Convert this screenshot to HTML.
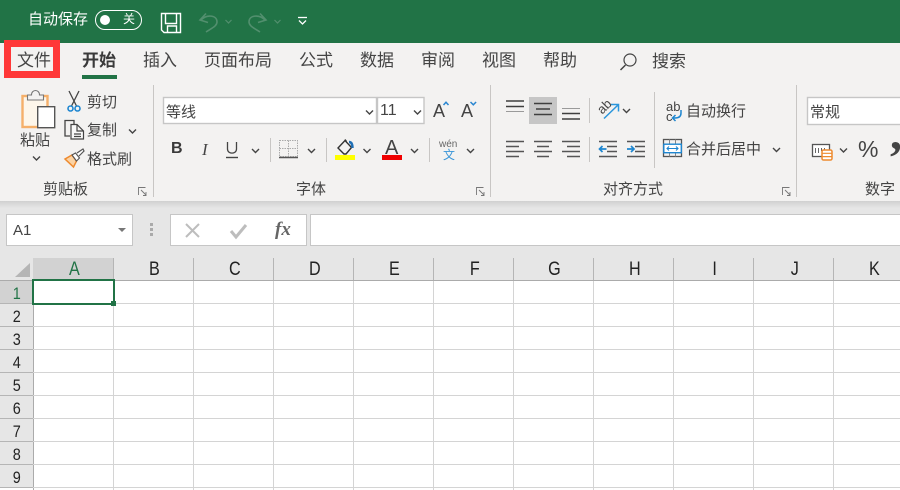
<!DOCTYPE html>
<html><head><meta charset="utf-8">
<style>
html,body{margin:0;padding:0;width:900px;height:490px;overflow:hidden;background:#fff}
body{position:relative;font-family:"Liberation Sans","Noto Sans CJK SC",sans-serif;color:#3f3f3f}
.t{position:absolute;white-space:nowrap;line-height:1}
.a{position:absolute}
svg{position:absolute;overflow:visible}
.col{position:absolute;top:258px;height:22px;width:79px;border-right:1px solid #b5b5b5;background:#e6e6e6;text-align:center;font-size:19px;line-height:24px;color:#222;overflow:visible}
.col span{display:inline-block;transform:translateX(1px) scaleX(.85)}
.rh span{display:inline-block;transform:scaleX(.85)}
.rh{position:absolute;left:0;width:33px;text-align:center;font-size:17px;color:#222;line-height:26px;height:22px;background:#e6e6e6;border-bottom:1px solid #b5b5b5}
.vl{position:absolute;top:281px;height:209px;width:1px;background:#d4d4d4}
.hl{position:absolute;left:33px;width:867px;height:1px;background:#d4d4d4}
.sep{position:absolute;width:1px;background:#c8c6c4}
.l{font-size:15px;color:#444}
.tab{font-size:17px;color:#444;top:52px}
</style></head><body>

<!-- title bar -->
<div class="a" style="left:0;top:0;width:900px;height:43px;background:#217346"></div>
<div class="t" style="left:28px;top:12px;font-size:15px;color:#fff">自动保存</div>
<div class="a" style="left:95px;top:10px;width:45px;height:18px;border:1px solid #fff;border-radius:11px"></div>
<div class="a" style="left:100px;top:15px;width:10px;height:10px;border-radius:50%;background:#fff"></div>
<div class="t" style="left:123px;top:13px;font-size:12px;color:#fff">关</div>
<svg style="left:0;top:0" width="320" height="43" fill="none">
<path d="M161.500 13.500h19v19h-16.500l-2.500-2.500z M165.500 13.500v10h11v-10 M167.500 32.500v-6.500h9v6.500" stroke="#fff" stroke-width="1.400"/>
<path d="M206 13.500L200 20l8 2.500 M201 20c6-6 16-5 16 2 0 4-5 6-11 10" stroke="#528f6e" stroke-width="1.600"/>
<path d="M225.500 20l3 3 3-3" stroke="#528f6e" stroke-width="1.200"/>
<path d="M260 13.500L266 20l-8 2.500 M265 20c-6-6-16-5-16 2 0 4 5 6 11 10" stroke="#528f6e" stroke-width="1.600"/>
<path d="M274.500 20l3 3 3-3" stroke="#528f6e" stroke-width="1.200"/>
<path d="M298 17.500h9" stroke="#fff" stroke-width="1.300"/>
<path d="M299 20.500l3.500 3.500 3.500-3.500" stroke="#fff" stroke-width="1.300"/>
</svg>

<!-- tabs -->
<div class="a" style="left:0;top:43px;width:900px;height:158px;background:#f3f2f1"></div>
<div class="a" style="left:4px;top:40px;width:42px;height:24px;border:7px solid #ff3838;background:#f3f2f1"></div>
<div class="t tab" style="left:17px">文件</div>
<div class="t tab" style="left:82px;font-weight:bold;color:#3a3a3a">开始</div>
<div class="a" style="left:82px;top:75px;width:35px;height:4px;background:#217346"></div>
<div class="t tab" style="left:143px">插入</div>
<div class="t tab" style="left:204px">页面布局</div>
<div class="t tab" style="left:299px">公式</div>
<div class="t tab" style="left:360px">数据</div>
<div class="t tab" style="left:421px">审阅</div>
<div class="t tab" style="left:482px">视图</div>
<div class="t tab" style="left:543px">帮助</div>
<div class="t tab" style="left:652px;top:53px">搜索</div>
<svg style="left:0;top:0" width="900" height="210" fill="none">
<circle cx="630" cy="60" r="6" stroke="#444" stroke-width="1.200"/><path d="M625.500 65l-5 5" stroke="#444" stroke-width="1.500"/>

<!-- paste -->
<rect x="22.500" y="96" width="25" height="31" fill="#fdf6ea" stroke="#f5b06a" stroke-width="2.400"/>
<path d="M27.500 100v-5h4c0-6 8-6 8 0h4v5z" fill="#f3f2f1" stroke="#777" stroke-width="1.100"/>
<rect x="37.700" y="106.700" width="17" height="21" fill="#fff" stroke="#555" stroke-width="1.400"/>
<path d="M33 156.500l3.500 3.500 3.500-3.500" stroke="#444" stroke-width="1.400"/>
<!-- scissors -->
<path d="M69 91l7.500 15 M79 91l-7.500 15" stroke="#444" stroke-width="1.300"/>
<circle cx="70.500" cy="108.500" r="2.500" stroke="#1e86d0" stroke-width="1.600"/><circle cx="77.500" cy="108.500" r="2.500" stroke="#1e86d0" stroke-width="1.600"/>
<!-- copy -->
<path d="M70 136h-5v-15.500h9v4" stroke="#444" stroke-width="1.300"/>
<path d="M71 124.500h6l6.500 6.500v8h-12.500z M77 125v6h6 M74 134h7 M74 136.500h7" stroke="#444" stroke-width="1.200" fill="#f8f8f8"/>
<path d="M129 129.500l3.500 3.500 3.500-3.500" stroke="#444" stroke-width="1.400"/>
<!-- brush -->
<path d="M65 159l7-4 4.500 6-3 6z" fill="#fbd3a4" stroke="#ee8a2e" stroke-width="1.500"/>
<path d="M72 155l3.500-2 4 5-3 3z" fill="#fff" stroke="#555" stroke-width="1.100"/>
<path d="M77 153l6-4 1 2-5 5" fill="#fff" stroke="#555" stroke-width="1.200"/>
<!-- launcher -->
<path d="M138.500 195v-7.500h7 M141 190l5 5 M146 192v3.500h-3" stroke="#777" stroke-width=".9"/>
<path d="M476.500 195v-7.500h7 M479 190l5 5 M484 192v3.500h-3" stroke="#777" stroke-width=".9"/>
<path d="M782.500 195v-7.500h7 M785 190l5 5 M790 192v3.500h-3" stroke="#777" stroke-width=".9"/>

<!-- font combos -->
<rect x="163.500" y="97.500" width="213" height="26" fill="#fff" stroke="#c6c6c6" stroke-width="1.400"/>
<rect x="377.500" y="97.500" width="46.500" height="26" fill="#fff" stroke="#c6c6c6" stroke-width="1.400"/>
<path d="M366 110.500l3.500 3.500 3.500-3.500 M414 110.500l3.500 3.500 3.500-3.500" stroke="#444" stroke-width="1.400"/>
<path d="M443.500 105l2.500-2.800 2.500 2.800" stroke="#2a86d0" stroke-width="1.500"/>
<path d="M470.500 102l2.800 2.800 2.800-2.800" stroke="#2a86d0" stroke-width="1.500"/>
<!-- underline etc -->
<path d="M227.500 142v7c0 5.500 9 5.500 9 0v-7" stroke="#444" stroke-width="1.300"/><path d="M226 157.500h12" stroke="#444" stroke-width="1.400"/>
<path d="M252 149l3.500 3.500 3.500-3.500 M308 149l3.500 3.500 3.500-3.500 M363.500 149l3.500 3.500 3.500-3.500 M411 149l3.500 3.500 3.500-3.500 M467 149l3.500 3.500 3.500-3.500" stroke="#444" stroke-width="1.400"/>
<!-- borders -->
<path d="M279.500 140.500h18v16h-18z M288.500 140.500v16 M279.500 148.500h18" stroke="#aaa" stroke-width="1" stroke-dasharray="1.500 1"/>
<path d="M279 157.500h19" stroke="#555" stroke-width="1.600"/>
<!-- fill -->
<path d="M338 148l7-7.500 6.500 7-5.500 6.500h-2z" stroke="#333" stroke-width="1.400"/>
<path d="M345 139.500l1.500 2" stroke="#333" stroke-width="1.400"/>
<path d="M349 142c3 0 3.500 3 3.500 6" stroke="#1e6fb5" stroke-width="2.400"/>
<rect x="335" y="155" width="20" height="5" fill="#ffff00"/>
<rect x="382" y="155" width="20" height="5" fill="#f00000"/>
<!-- alignment -->
<rect x="529" y="97" width="28" height="27" fill="#c6c6c6"/>
<path d="M506 101h18 M506 106.500h18" stroke="#3f3f3f" stroke-width="1.500"/>
<path d="M506 111.500h18" stroke="#9a9a9a" stroke-width="1"/>
<path d="M534 103.500h18 M536 109h14 M534 114.500h18" stroke="#3f3f3f" stroke-width="1.500"/>
<path d="M562 108.500h18" stroke="#9a9a9a" stroke-width="1"/>
<path d="M562 113.500h18 M562 119h18" stroke="#3f3f3f" stroke-width="1.500"/>
<path d="M506 141.500h18 M506 146.500h13 M506 151.500h18 M506 156.500h13" stroke="#555" stroke-width="1.500"/>
<path d="M534 141.500h18 M537 146.500h12 M534 151.500h18 M537 156.500h12" stroke="#555" stroke-width="1.500"/>
<path d="M562 141.500h18 M567 146.500h13 M562 151.500h18 M567 156.500h13" stroke="#555" stroke-width="1.500"/>
<path d="M604 118.500l14-13.500 M611 104.500h7.500v7" stroke="#2a96dc" stroke-width="1.500"/>
<path d="M623 109l3.500 3.500 3.500-3.500" stroke="#444" stroke-width="1.400"/>
<!-- indents -->
<path d="M599 141.500h18 M607 146.500h10 M607 151.500h10 M599 156.500h18" stroke="#555" stroke-width="1.500"/>
<path d="M599.500 149h7 M602.500 146l-3 3 3 3" stroke="#1e86d0" stroke-width="1.700"/>
<path d="M627 141.500h18 M635 146.500h10 M635 151.500h10 M627 156.500h18" stroke="#555" stroke-width="1.500"/>
<path d="M627 149h7 M631 146l3 3-3 3" stroke="#1e86d0" stroke-width="1.700"/>
<!-- wrap -->
<path d="M681 110v3c0 4-3 5-6 5h-2.500 M675.500 115l-3 3 3 3" stroke="#1e86d0" stroke-width="1.500"/>
<!-- merge -->
<rect x="663.500" y="139.500" width="18" height="17" fill="#f3f2f1" stroke="#555" stroke-width="1.300"/>
<path d="M669.500 139.500v17 M675.500 139.500v17" stroke="#888" stroke-width="1"/>
<rect x="663.800" y="144.200" width="17.500" height="8.500" fill="#fff" stroke="#1e86d0" stroke-width="1.400"/>
<path d="M667 148.500h11 M669 146.500l-2 2 2 2 M676 146.500l2 2-2 2" stroke="#1e86d0" stroke-width="1.100"/>
<path d="M773 148l3.500 3.500 3.500-3.500" stroke="#444" stroke-width="1.400"/>
<!-- number -->
<rect x="812.500" y="144.500" width="17" height="12" fill="#fff" stroke="#555" stroke-width="1.300"/>
<path d="M815.500 148v5 M818.500 148v5 M821.500 148v3 M824.500 148v3" stroke="#666" stroke-width="1"/>
<rect x="822" y="150" width="10" height="10" rx="1.500" fill="#fff" stroke="#ee8a2e" stroke-width="1.500"/>
<path d="M822 153.300h10 M822 156.600h10" stroke="#ee8a2e" stroke-width="1.200"/>
<path d="M840 148.500l3.500 3.500 3.500-3.500" stroke="#444" stroke-width="1.400"/>
<rect x="807.500" y="97.500" width="100" height="27" fill="#fff" stroke="#c6c6c6" stroke-width="1.400"/>
</svg>

<!-- clipboard labels -->
<div class="t l" style="left:20px;top:133px">粘贴</div>
<div class="t l" style="left:87px;top:95px">剪切</div>
<div class="t l" style="left:87px;top:123px">复制</div>
<div class="t l" style="left:87px;top:152px">格式刷</div>
<div class="t l" style="left:43px;top:182px">剪贴板</div>
<div class="sep" style="left:153px;top:85px;height:112px"></div>

<div class="t l" style="left:166px;top:105px">等线</div>
<div class="t" style="left:380px;top:103px;font-size:16px;color:#444">11</div>
<div class="t" style="left:433px;top:102px;font-size:18px;color:#444">A</div>
<div class="t" style="left:461px;top:102px;font-size:18px;color:#444">A</div>
<div class="t" style="left:171px;top:141px;font-size:16px;font-weight:bold;color:#3a3a3a">B</div>
<div class="t" style="left:202px;top:141px;font-size:17px;font-style:italic;font-family:'Liberation Serif',serif;color:#444">I</div>
<div class="sep" style="left:270px;top:138px;height:24px"></div>
<div class="sep" style="left:326px;top:138px;height:24px"></div>
<div class="sep" style="left:429px;top:138px;height:24px"></div>
<div class="t" style="left:385px;top:138px;font-size:20px;color:#444">A</div>
<div class="t" style="left:439px;top:140px;font-size:10px;color:#666">wén</div>
<div class="t" style="left:443px;top:149px;font-size:12px;color:#3a96d8">文</div>
<div class="t l" style="left:296px;top:182px">字体</div>
<div class="sep" style="left:490px;top:85px;height:112px"></div>

<div class="sep" style="left:589px;top:98px;height:25px"></div>
<div class="sep" style="left:589px;top:137px;height:25px"></div>
<div class="sep" style="left:654px;top:92px;height:76px"></div>
<div class="t" style="left:597px;top:100px;font-size:13px;color:#444;transform:rotate(-45deg)">ab</div>
<div class="t" style="left:666px;top:100px;font-size:13px;color:#444">ab</div>
<div class="t" style="left:666px;top:110px;font-size:13px;color:#444">c</div>
<div class="t l" style="left:686px;top:104px">自动换行</div>
<div class="t l" style="left:686px;top:142px">合并后居中</div>
<div class="t l" style="left:603px;top:182px">对齐方式</div>
<div class="sep" style="left:796px;top:85px;height:112px"></div>
<div class="t l" style="left:810px;top:105px">常规</div>
<div class="t" style="left:858px;top:138px;font-size:23px;color:#444">%</div>
<div class="t" style="left:890px;top:110px;font-size:48px;font-weight:bold;font-family:'Liberation Serif',serif;color:#444">,</div>
<div class="t l" style="left:865px;top:182px">数字</div>

<!-- formula bar -->
<div class="a" style="left:0;top:201px;width:900px;height:57px;background:#e6e6e6"></div>
<div class="a" style="left:0;top:201px;width:900px;height:7px;background:linear-gradient(#d0d0d0,#e6e6e6)"></div>
<div class="a" style="left:6px;top:214px;width:125px;height:30px;background:#fff;border:1px solid #c6c6c6"></div>
<div class="t" style="left:13px;top:223px;font-size:15px;color:#444">A1</div>
<div class="a" style="left:118px;top:228px;width:0;height:0;border-left:4px solid transparent;border-right:4px solid transparent;border-top:4px solid #777"></div>
<div class="a" style="left:150px;top:223px;width:3px;height:3px;background:#aaa;box-shadow:0 5px 0 #aaa,0 10px 0 #aaa"></div>
<div class="a" style="left:170px;top:214px;width:135px;height:30px;background:#fff;border:1px solid #c6c6c6"></div>
<div class="a" style="left:310px;top:214px;width:600px;height:30px;background:#fff;border:1px solid #c6c6c6"></div>
<svg style="left:0;top:0" width="320" height="250" fill="none">
<path d="M186 224l13 13 M199 224l-13 13" stroke="#bdbdbd" stroke-width="2"/>
<path d="M231 231l5 6 10-12" stroke="#bdbdbd" stroke-width="3"/>
</svg>
<div class="t" style="left:275px;top:220px;font-size:19px;font-style:italic;font-weight:bold;font-family:'Liberation Serif',serif;color:#666">fx</div>

<!-- grid header -->
<div class="a" style="left:0;top:258px;width:34px;height:22px;background:#e6e6e6"></div>
<svg style="left:0;top:258px" width="33" height="22"><path d="M15 19L30 5V19z" fill="#b5b5b5"/></svg>
<div class="col" style="left:34px;background:#d2d2d2;color:#217346"><span>A</span></div>
<div class="a" style="left:33px;top:258px;width:1px;height:22px;background:#d2d2d2"></div>
<div class="col" style="left:114px"><span>B</span></div>
<div class="col" style="left:194px"><span>C</span></div>
<div class="col" style="left:274px"><span>D</span></div>
<div class="col" style="left:354px"><span>E</span></div>
<div class="col" style="left:434px"><span>F</span></div>
<div class="col" style="left:514px"><span>G</span></div>
<div class="col" style="left:594px"><span>H</span></div>
<div class="col" style="left:674px"><span>I</span></div>
<div class="col" style="left:754px"><span>J</span></div>
<div class="col" style="left:834px"><span>K</span></div>
<div class="a" style="left:0;top:280px;width:900px;height:1px;background:#ababab"></div>

<div class="rh" style="top:281px;background:#d2d2d2;color:#217346"><span>1</span></div>
<div class="rh" style="top:304px"><span>2</span></div>
<div class="rh" style="top:327px"><span>3</span></div>
<div class="rh" style="top:350px"><span>4</span></div>
<div class="rh" style="top:373px"><span>5</span></div>
<div class="rh" style="top:396px"><span>6</span></div>
<div class="rh" style="top:419px"><span>7</span></div>
<div class="rh" style="top:442px"><span>8</span></div>
<div class="rh" style="top:465px"><span>9</span></div>
<div class="a" style="left:33px;top:281px;width:1px;height:209px;background:#ababab"></div>

<div class="vl" style="left:113px"></div><div class="vl" style="left:193px"></div><div class="vl" style="left:273px"></div>
<div class="vl" style="left:353px"></div><div class="vl" style="left:433px"></div><div class="vl" style="left:513px"></div>
<div class="vl" style="left:593px"></div><div class="vl" style="left:673px"></div><div class="vl" style="left:753px"></div><div class="vl" style="left:833px"></div>
<div class="hl" style="top:303px"></div><div class="hl" style="top:326px"></div><div class="hl" style="top:349px"></div>
<div class="hl" style="top:372px"></div><div class="hl" style="top:395px"></div><div class="hl" style="top:418px"></div>
<div class="hl" style="top:441px"></div><div class="hl" style="top:464px"></div><div class="hl" style="top:487px"></div>

<!-- selection -->
<div class="a" style="left:32px;top:279px;width:79px;height:22px;border:2px solid #217346"></div>
<div class="a" style="left:111px;top:301px;width:5px;height:5px;background:#217346"></div>
</body></html>
